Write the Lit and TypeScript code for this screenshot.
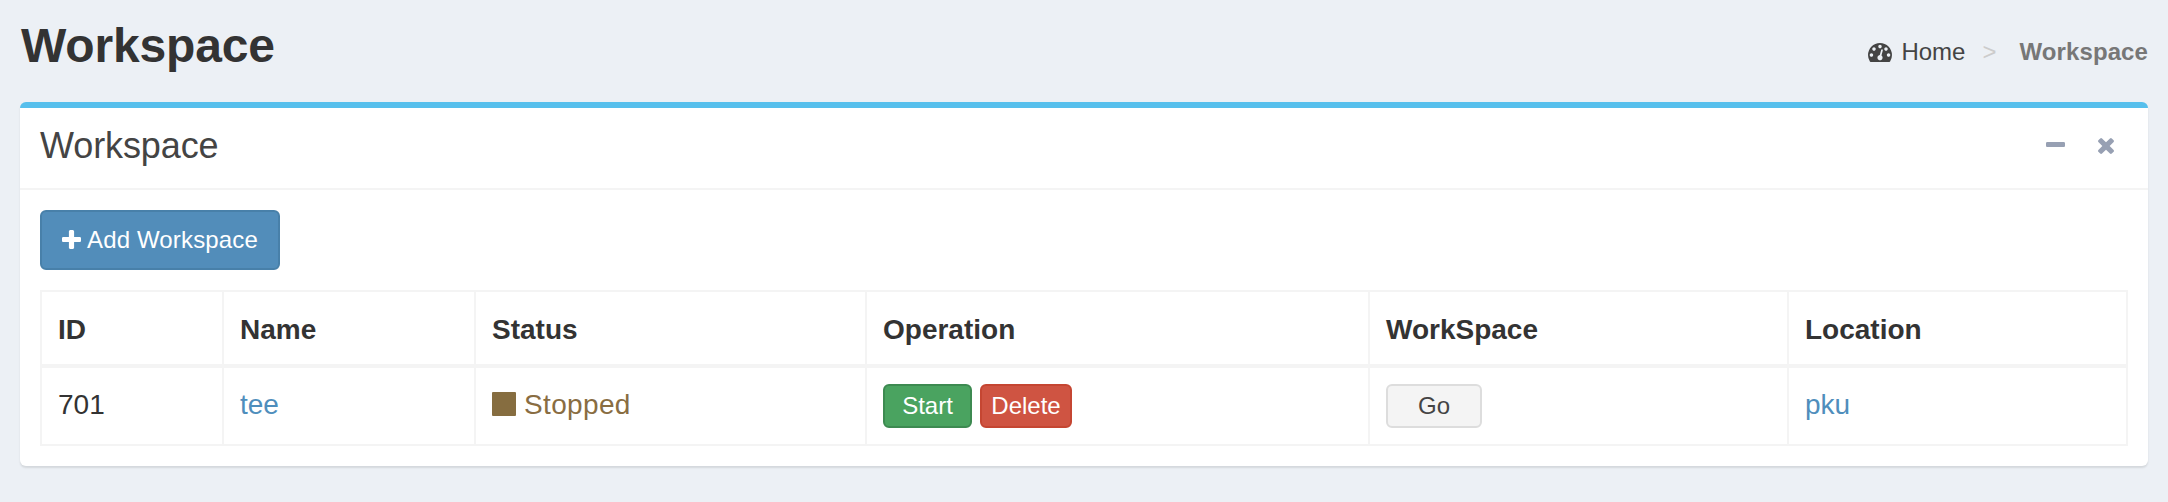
import { LitElement, html, css, svg } from "lit";
import { customElement, state } from "lit/decorators.js";

const tachometer = svg`<path d="M384 1152q0-53-37.5-90.5t-90.5-37.5-90.5 37.5-37.5 90.5 37.5 90.5 90.5 37.5 90.5-37.5 37.5-90.5zm192-448q0-53-37.5-90.5t-90.5-37.5-90.5 37.5-37.5 90.5 37.5 90.5 90.5 37.5 90.5-37.5 37.5-90.5zm428 481l101-382q6-26-7.5-48.5t-38.5-29.5-48 6.5-30 39.5l-101 382q-60 5-107 43.5t-63 98.5q-20 77 20 146t117 89 146-20 89-117q16-60-6-117t-72-91zm660-33q0-53-37.5-90.5t-90.5-37.5-90.5 37.5-37.5 90.5 37.5 90.5 90.5 37.5 90.5-37.5 37.5-90.5zm-640-640q0-53-37.5-90.5t-90.5-37.5-90.5 37.5-37.5 90.5 37.5 90.5 90.5 37.5 90.5-37.5 37.5-90.5zm448 192q0-53-37.5-90.5t-90.5-37.5-90.5 37.5-37.5 90.5 37.5 90.5 90.5 37.5 90.5-37.5 37.5-90.5zm320 448q0 261-141 483-19 29-54 29h-1402q-35 0-54-29-141-221-141-483 0-182 71-348t191-286 286-191 348-71 348 71 286 191 191 286 71 348z"/>`;
const plus = svg`<path d="M1600 736v192q0 40-28 68t-68 28h-416v416q0 40-28 68t-68 28h-192q-40 0-68-28t-28-68v-416h-416q-40 0-68-28t-28-68v-192q0-40 28-68t68-28h416v-416q0-40 28-68t68-28h192q40 0 68 28t28 68v416h416q40 0 68 28t28 68z"/>`;
const minus = svg`<path d="M1600 736v192q0 40-28 68t-68 28h-1216q-40 0-68-28t-28-68v-192q0-40 28-68t68-28h1216q40 0 68 28t28 68z"/>`;
const times = svg`<path d="M1490 1322q0 40-28 68l-136 136q-28 28-68 28t-68-28l-294-294-294 294q-28 28-68 28t-68-28l-136-136q-28-28-28-68t28-68l294-294-294-294q-28-28-28-68t28-68l136-136q28-28 68-28t68 28l294 294 294-294q28-28 68-28t68 28l136 136q28 28 28 68t-28 68l-294 294 294 294q28 28 28 68z"/>`;

interface Workspace {
  id: number;
  name: string;
  status: string;
  location: string;
}

@customElement("app-root")
export class AppRoot extends LitElement {
  @state() private rows: Workspace[] = [
    { id: 701, name: "tee", status: "Stopped", location: "pku" },
  ];

  static styles = css`
    :host {
      display: block;
      box-sizing: border-box;
      height: 502px;
      padding: 0 20px;
      background: #ecf0f5;
      color: #333;
      font: 28px/40px "Liberation Sans", Arial, sans-serif;
      overflow: hidden;
    }
    *, *::before { box-sizing: border-box; }
    svg { display: block; fill: currentColor; flex: none; }
    a { color: #4f8ebc; text-decoration: none; }
    .top { display: flex; justify-content: space-between; height: 102px; }
    h1 { margin: 19px 0 0 1px; font-size: 48px; line-height: 53px; letter-spacing: -0.15px; }
    .crumbs {
      display: flex;
      align-items: flex-start;
      padding-top: 35px;
      font-size: 24px;
      line-height: 34px;
      color: #444;
    }
    .dash { width: 24px; height: 19px; margin: 8px 9px 0 0; }
    .sep { color: #ccc; margin: 0 23px 0 17px; }
    .current { color: #777; font-weight: bold; letter-spacing: 0.1px; }
    .box {
      height: 364px;
      border-top: 6px solid #56bfec;
      border-radius: 6px;
      background: #fff;
      box-shadow: 0 2px 2px rgba(0, 0, 0, 0.1);
    }
    .head {
      display: flex;
      justify-content: space-between;
      height: 82px;
      padding: 20px 34px 0 20px;
      border-bottom: 2px solid #f4f4f4;
      color: #444;
    }
    h2 { margin: 0; font-size: 36px; font-weight: normal; line-height: 36px; letter-spacing: -0.1px; }
    .tools { display: flex; color: #97a0b3; }
    .minus { width: 19px; height: 5px; margin: 14px 33px 0 0; }
    .times { width: 16px; height: 16px; margin-top: 10px; }
    .body { padding: 20px; }
    button {
      display: inline-flex;
      align-items: center;
      justify-content: center;
      margin: 0;
      padding: 0;
      border: 2px solid;
      border-radius: 6px;
      font: 24px/34px "Liberation Sans", Arial, sans-serif;
      color: #fff;
    }
    .add { width: 240px; height: 60px; gap: 6px; background: #528dba; border-color: #4880a9; letter-spacing: 0.15px; }
    .plus { width: 19px; height: 19px; margin-bottom: 2px; }
    .table {
      display: grid;
      grid-template-columns: 182fr 252fr 391fr 503fr 419fr 339fr;
      grid-template-rows: 76px 78px;
      margin-top: 20px;
      border: solid #f4f4f4;
      border-width: 2px 0 0 2px;
    }
    .th, .td { border-right: 2px solid #f4f4f4; padding: 0 16px; }
    .th { padding-top: 18px; border-bottom: 4px solid #f4f4f4; font-weight: bold; }
    .td { padding-top: 17px; border-bottom: 2px solid #f4f4f4; }
    .status { display: flex; gap: 8px; color: #896d42; letter-spacing: 0.35px; }
    .status::before { content: ""; width: 24px; height: 24px; margin-top: 7px; border-radius: 1px; background: #866d40; }
    .ops { display: flex; gap: 8px; padding-top: 16px; }
    .ops button { height: 44px; }
    .start { width: 89px; background: #4aa360; border-color: #3d8a51; }
    .delete { width: 92px; background: #cf5442; border-color: #c54632; }
    .go { width: 96px; background: #f4f4f4; border-color: #ddd; color: #444; }
  `;

  render() {
    const headings = ["ID", "Name", "Status", "Operation", "WorkSpace", "Location"];
    return html`
      <header class="top">
        <h1>Workspace</h1>
        <nav class="crumbs">
          <svg class="dash" viewBox="0 256 1792 1408" preserveAspectRatio="none">${tachometer}</svg>
          <span>Home</span><span class="sep">&gt;</span><span class="current">Workspace</span>
        </nav>
      </header>
      <section class="box">
        <div class="head">
          <h2>Workspace</h2>
          <div class="tools">
            <svg class="minus" viewBox="192 640 1408 384" preserveAspectRatio="none">${minus}</svg>
            <svg class="times" viewBox="302 366 1188 1188">${times}</svg>
          </div>
        </div>
        <div class="body">
          <button class="add">
            <svg class="plus" viewBox="192 128 1408 1408">${plus}</svg><span>Add Workspace</span>
          </button>
          <div class="table">
            ${headings.map((h) => html`<div class="th">${h}</div>`)}
            ${this.rows.map(
              (r) => html`
                <div class="td">${r.id}</div>
                <div class="td"><a href="#">${r.name}</a></div>
                <div class="td status">${r.status}</div>
                <div class="td ops">
                  <button class="start">Start</button><button class="delete">Delete</button>
                </div>
                <div class="td ops"><button class="go">Go</button></div>
                <div class="td"><a href="#">${r.location}</a></div>
              `
            )}
          </div>
        </div>
      </section>
    `;
  }
}
